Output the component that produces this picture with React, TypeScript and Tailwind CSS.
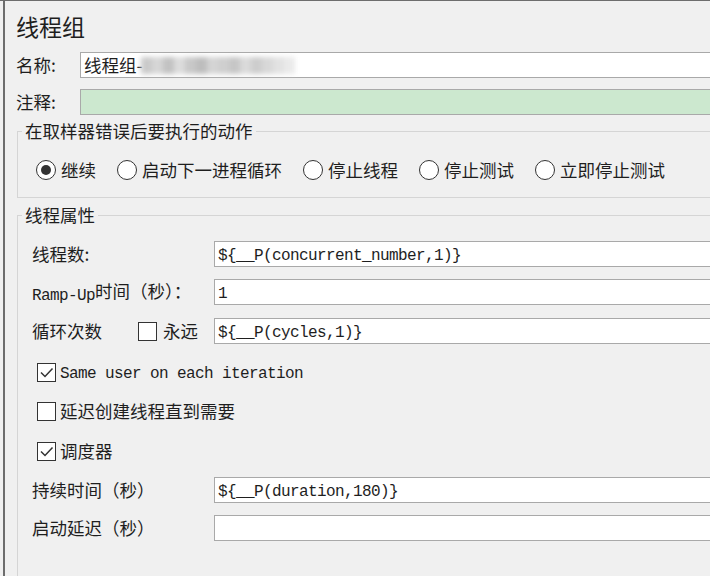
import React from 'react';

const mono = "font-['Liberation_Mono','Noto_Sans_CJK_SC',monospace] text-[16px] tracking-[-0.6px] relative top-[2px]";

function Radio({ checked, label }: { checked?: boolean; label: string }) {
    return (
        <div className="flex items-center gap-[5px]">
            <span className="w-[20px] h-[20px] rounded-full border border-[#333] bg-white flex items-center justify-center">
                {checked && <span className="w-[10px] h-[10px] rounded-full bg-[#333]" />}
            </span>
            <span>{label}</span>
        </div>
    );
}

function Check({ checked }: { checked?: boolean }) {
    return (
        <span className="w-[19px] h-[19px] border border-[#333] bg-white flex items-center justify-center shrink-0">
            {checked && (
                <svg width="17" height="17" viewBox="0 0 17 17">
                    <path d="M3 8.5 L7 12.5 L14.5 4.5" fill="none" stroke="#333" strokeWidth="1.5" />
                </svg>
            )}
        </span>
    );
}

function Field({ children, green }: { children?: React.ReactNode; green?: boolean }) {
    return (
        <div className={`flex-1 -mr-[20px] h-full border border-[#a9a9a9] px-[3px] flex items-center ${green ? 'bg-[#cce8cf]' : 'bg-white'}`}>
            {children}
        </div>
    );
}

export default function App() {
    const blur = ['#cacaca', '#d6d6d6', '#c2c2c2', '#dcdcdc', '#c8c8c8', '#bdbdbd', '#d4d4d4', '#cfcfcf', '#c6c6c6', '#dadada', '#cdcdcd', '#d8d8d8', '#e2e2e2', '#eaeaea'];

    return (
        <div className="w-[710px] h-[576px] overflow-hidden bg-[#f0f0f0] border-t border-[#6d6d6d] text-[#1e1e1e] text-[17.5px] font-['Noto_Sans_CJK_SC','Liberation_Sans',sans-serif]">
            <div className="ml-[3px] h-full border-l-2 border-[#6d6d6d] pl-[11px]">
                {/* title */}
                <div className="h-[51px] flex items-center text-[23px] leading-none">线程组</div>

                {/* name + comment */}
                <div className="h-[26px] flex items-center">
                    <div className="w-[64px]">名称:</div>
                    <Field>
                        <span>线程组-</span>
                        <span className="flex blur-[2.5px] ml-[-2px]">
                            {blur.map((c, i) => (
                                <span key={i} className="w-[11px] h-[17px]" style={{ background: c }} />
                            ))}
                        </span>
                    </Field>
                </div>
                <div className="mt-[11px] h-[26px] flex items-center">
                    <div className="w-[64px]">注释:</div>
                    <Field green />
                </div>

                {/* error action */}
                <fieldset className="mt-[4px] ml-[1px] -mr-[20px] border border-[#d5d5d5] pl-[4px] pb-[17px]">
                    <legend className="px-[3px] leading-[24px]">在取样器错误后要执行的动作</legend>
                    <div className="mt-[17px] h-[20px] flex items-center gap-[21px] pl-[14px]">
                        <Radio checked label="继续" />
                        <Radio label="启动下一进程循环" />
                        <Radio label="停止线程" />
                        <Radio label="停止测试" />
                        <Radio label="立即停止测试" />
                    </div>
                </fieldset>

                {/* thread properties */}
                <fieldset className="mt-[5px] ml-[1px] -mr-[20px] border border-[#d5d5d5] pl-[4px] pb-[60px]">
                    <legend className="px-[3px] leading-[24px]">线程属性</legend>
                    <div className="pl-[10px] flex flex-col">
                        <div className="mt-[14px] h-[26px] flex items-center">
                            <div className="w-[182px]">线程数:</div>
                            <Field><span className={mono}>{'${__P(concurrent_number,1)}'}</span></Field>
                        </div>
                        <div className="mt-[12px] h-[26px] flex items-center">
                            <div className="w-[182px]"><span className={mono}>Ramp-Up</span>时间（秒）：</div>
                            <Field><span className={mono}>1</span></Field>
                        </div>
                        <div className="mt-[13px] h-[26px] flex items-center">
                            <div className="w-[106px]">循环次数</div>
                            <div className="w-[76px] flex items-center gap-[6px]">
                                <Check />
                                <span>永远</span>
                            </div>
                            <Field><span className={mono}>{'${__P(cycles,1)}'}</span></Field>
                        </div>
                        <div className="mt-[15px] h-[26px] flex items-center gap-[4px] pl-[5px]">
                            <Check checked />
                            <span className={mono}>Same user on each iteration</span>
                        </div>
                        <div className="mt-[13px] h-[26px] flex items-center gap-[4px] pl-[5px]">
                            <Check />
                            <span>延迟创建线程直到需要</span>
                        </div>
                        <div className="mt-[14px] h-[26px] flex items-center gap-[4px] pl-[5px]">
                            <Check checked />
                            <span>调度器</span>
                        </div>
                        <div className="mt-[13px] h-[26px] flex items-center">
                            <div className="w-[182px]">持续时间（秒）</div>
                            <Field><span className={mono}>{'${__P(duration,180)}'}</span></Field>
                        </div>
                        <div className="mt-[12px] h-[26px] flex items-center">
                            <div className="w-[182px]">启动延迟（秒）</div>
                            <Field />
                        </div>
                    </div>
                </fieldset>
            </div>
        </div>
    );
}
